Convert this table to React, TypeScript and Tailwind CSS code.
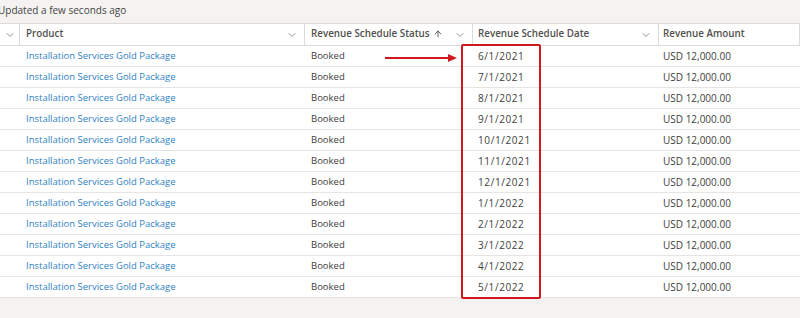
import { ArrowUp, ChevronDown } from "lucide-react";

const rows = [
  "6/1/2021",
  "7/1/2021",
  "8/1/2021",
  "9/1/2021",
  "10/1/2021",
  "11/1/2021",
  "12/1/2021",
  "1/1/2022",
  "2/1/2022",
  "3/1/2022",
  "4/1/2022",
  "5/1/2022",
];

const cols = "grid grid-cols-[20px_285px_168px_186px_1fr]";

const HeaderCell = ({ label, arrow, chevron = true, pad = "pl-[6px]" }: { label: string; arrow?: boolean; chevron?: boolean; pad?: string }) => (
  <div className={`flex items-center justify-between ${pad} pr-[6px] border-r border-[#dddbda] h-full`}>
    <span className="flex items-center gap-[3px] font-semibold text-[#514f4d] text-[9.8px]">
      {label}
      {arrow && <ArrowUp size={10} strokeWidth={2.2} className="text-[#514f4d] -mt-[1px]" />}
    </span>
    {chevron && <ChevronDown size={12} strokeWidth={1.5} className="text-[#706e6b]" />}
  </div>
);

export default function App() {
  return (
    <div
      className="relative w-[800px] h-[318px] bg-[#f4f3f2] overflow-hidden text-[10px] text-[#3e3e3c]"
      style={{ fontFamily: '"Open Sans", "Noto Sans", sans-serif' }}
    >
      <div className="h-[23px] flex items-center -ml-[2px] text-[#444] pb-[3px]">Updated a few seconds ago</div>
      <div className={`${cols} h-[23px] bg-white border-y border-[#dddbda]`}>
        <div className="flex items-center justify-center border-r border-[#dddbda]">
          <ChevronDown size={12} strokeWidth={1.5} className="text-[#706e6b]" />
        </div>
        <HeaderCell label="Product" />
        <HeaderCell label="Revenue Schedule Status" arrow />
        <HeaderCell label="Revenue Schedule Date" pad="pl-[5px]" />
        <HeaderCell label="Revenue Amount" chevron={false} pad="pl-[4px]" />
      </div>
      {rows.map((d) => (
        <div key={d} className={`${cols} h-[21px] bg-white border-b border-[#e6e5e4] items-center`}>
          <div />
          <div className="pl-[6px] text-[#2f7fc2] text-[9.5px]">Installation Services Gold Package</div>
          <div className="pl-[6px] text-[9.5px]">Booked</div>
          <div className="pl-[5px] tracking-[0.6px]">{d}</div>
          <div className="pl-[4px]">USD 12,000.00</div>
        </div>
      ))}

      <div className="absolute left-[461px] top-[44px] w-[80px] h-[255px] border-2 border-[#d0181f] rounded-[2px]" />
      <svg className="absolute left-[384px] top-[53px]" width="74" height="10" viewBox="0 0 74 10">
        <line x1="1" y1="5" x2="66" y2="5" stroke="#d0181f" strokeWidth="2" />
        <polygon points="64,1 73,5 64,9" fill="#d0181f" />
      </svg>
    </div>
  );
}
